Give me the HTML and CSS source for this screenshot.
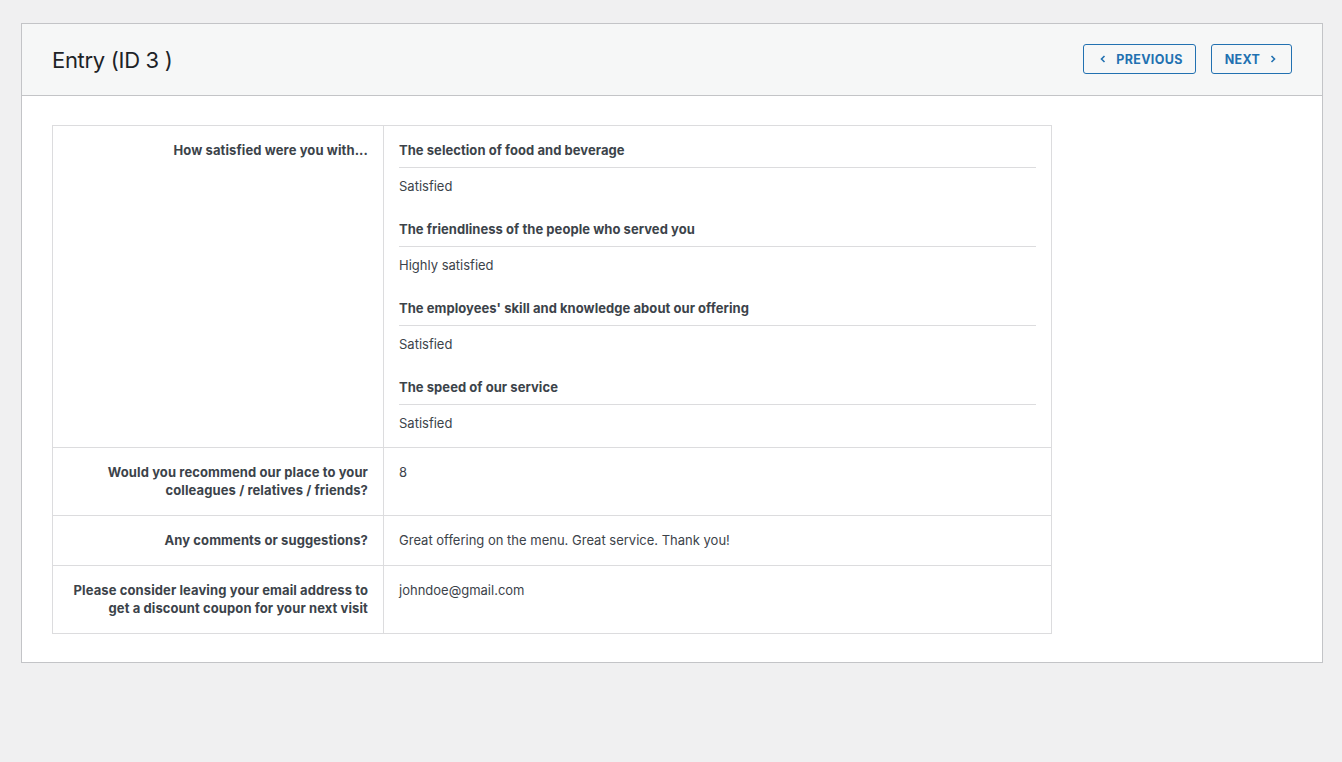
FILE: index.html
```html
<!DOCTYPE html>
<html lang="en">
<head>
<meta charset="utf-8">
<title>Entry</title>
<link rel="stylesheet" href="styles.css">
</head>
<body>
<div class="panel">
  <div class="panel-header">
    <h1 class="title">Entry (ID 3 )</h1>
    <div class="nav">
      <button class="btn"><svg class="chev" viewBox="0 0 10 10" width="10" height="10"><path d="M6.5 2 L3.5 5 L6.5 8" fill="none" stroke="currentColor" stroke-width="1.6"/></svg>Previous</button>
      <button class="btn">Next<svg class="chev" viewBox="0 0 10 10" width="10" height="10"><path d="M3.5 2 L6.5 5 L3.5 8" fill="none" stroke="currentColor" stroke-width="1.6"/></svg></button>
    </div>
  </div>
  <div class="panel-body">
    <table class="entry">
      <tr class="matrix">
        <th>How satisfied were you with...</th>
        <td>
          <div class="sub">
            <div class="sub-q">The selection of food and beverage</div>
            <div class="sub-a">Satisfied</div>
          </div>
          <div class="sub">
            <div class="sub-q">The friendliness of the people who served you</div>
            <div class="sub-a">Highly satisfied</div>
          </div>
          <div class="sub">
            <div class="sub-q">The employees' skill and knowledge about our offering</div>
            <div class="sub-a">Satisfied</div>
          </div>
          <div class="sub">
            <div class="sub-q">The speed of our service</div>
            <div class="sub-a">Satisfied</div>
          </div>
        </td>
      </tr>
      <tr>
        <th>Would you recommend our place to your colleagues / relatives / friends?</th>
        <td>8</td>
      </tr>
      <tr>
        <th>Any comments or suggestions?</th>
        <td>Great offering on the menu. Great service. Thank you!</td>
      </tr>
      <tr>
        <th>Please consider leaving your email address to get a discount coupon for your next visit</th>
        <td>johndoe@gmail.com</td>
      </tr>
    </table>
  </div>
</div>
</body>
</html>
```
FILE: styles.css
```css
html, body {
  margin: 0;
  padding: 0;
  background: #f0f0f1;
  font-family: Inter, "Noto Sans", "Liberation Sans", sans-serif;
  color: #3c434a;
}
body {
  padding: 23px 19px 0 21px;
}
.panel {
  background: #fff;
  border: 1px solid #c3c4c7;
}
.panel-header {
  background: #f6f7f7;
  border-bottom: 1px solid #c3c4c7;
  height: 71px;
  padding: 0 30px;
  display: flex;
  align-items: center;
  justify-content: space-between;
}
.title {
  margin: 0;
  font-size: 22px;
  font-weight: 400;
  color: #1d2327;
  letter-spacing: -0.3px;
}
.nav {
  display: flex;
  gap: 15px;
  margin-top: -1px;
}
.btn {
  height: 30px;
  box-sizing: border-box;
  border: 1px solid #2271b1;
  border-radius: 3px;
  background: #f6f7f7;
  color: #2271b1;
  font-family: inherit;
  font-size: 12.5px;
  font-weight: 700;
  text-transform: uppercase;
  letter-spacing: 0.35px;
  padding: 0 10px;
  display: flex;
  align-items: center;
  gap: 8px;
}
.btn:first-child { padding: 0 10px 0 12px; width: 113px; justify-content: center; }
.btn:last-child { width: 81px; justify-content: center; }
.chev { display: block; }
.panel-body {
  padding: 29px 30px 28px;
}
.entry {
  width: 1000px;
  border-collapse: collapse;
  border: 1px solid #dcdcde;
  font-size: 13px;
  line-height: 18px;
}
.entry th, .entry td {
  border: 1px solid #dcdcde;
  padding: 15px 15px 16px;
  vertical-align: top;
}
.entry .matrix th, .entry .matrix td {
  padding-bottom: 15px;
}
.entry th {
  width: 300px;
  text-align: right;
  font-weight: 700;
  color: #3c434a;
  letter-spacing: 0.1px;
}
.entry td {
  color: #3c434a;
}
.sub {
  margin-bottom: 25px;
}
.sub:last-child {
  margin-bottom: 0;
}
.sub-q {
  font-weight: 700;
  padding-bottom: 8px;
  border-bottom: 1px solid #dcdcde;
  letter-spacing: 0.05px;
}
.sub-a {
  padding-top: 9px;
}
```
